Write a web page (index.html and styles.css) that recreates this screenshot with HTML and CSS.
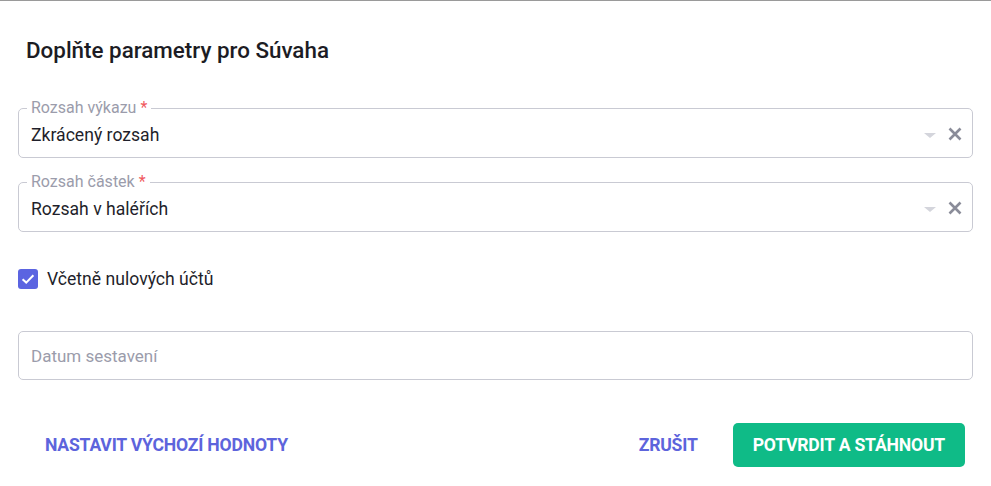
FILE: index.html
```html
<!DOCTYPE html>
<html lang="cs">
<head>
<meta charset="utf-8">
<link rel="stylesheet" href="styles.css">
</head>
<body>
<div class="dialog">
  <h2 class="title">Doplňte parametry pro Súvaha</h2>
  <div class="fields">
    <div class="field">
      <span class="label">Rozsah výkazu <span class="req">*</span></span>
      <span class="value">Zkrácený rozsah</span>
      <span class="arrow"></span>
      <svg class="clear" width="14" height="14" viewBox="0 0 14 14"><path d="M1.5 1.5 L12.5 12.5 M12.5 1.5 L1.5 12.5" stroke="#8a8c99" stroke-width="2.6"/></svg>
    </div>
    <div class="field">
      <span class="label">Rozsah částek <span class="req">*</span></span>
      <span class="value">Rozsah v haléřích</span>
      <span class="arrow"></span>
      <svg class="clear" width="14" height="14" viewBox="0 0 14 14"><path d="M1.5 1.5 L12.5 12.5 M12.5 1.5 L1.5 12.5" stroke="#8a8c99" stroke-width="2.6"/></svg>
    </div>
  </div>
  <label class="check">
    <span class="box"><svg width="16" height="16" viewBox="0 0 16 16"><path d="M2.6 8.2 L6.2 11.6 L13.4 4.2" fill="none" stroke="#fff" stroke-width="2"/></svg></span>
    <span class="check-text">Včetně nulových účtů</span>
  </label>
  <div class="plain-field"><span class="placeholder">Datum sestavení</span></div>
  <div class="actions">
    <button class="btn-text btn-reset">Nastavit výchozí hodnoty</button>
    <div class="right">
      <button class="btn-text">Zrušit</button>
      <button class="btn-primary">Potvrdit a stáhnout</button>
    </div>
  </div>
</div>
</body>
</html>
```
FILE: styles.css
```css
html, body {
  margin: 0;
  padding: 0;
  background: #fff;
}
body {
  font-family: Roboto, "Noto Sans", sans-serif;
  color: #1f1f2b;
  border-top: 1px solid #9a9a9a;
  width: 991px;
  height: 485px;
  overflow: hidden;
}
.dialog {
  padding: 0 18px;
}
.title {
  margin: 35px 0 0 8px;
  font-size: 22.4px;
  font-weight: 500;
  line-height: 28px;
  color: #1c1c24;
}
.fields {
  margin-top: 44px;
  display: flex;
  flex-direction: column;
  gap: 24px;
}
.field {
  position: relative;
  border: 1px solid #c9cad3;
  border-radius: 5px;
  height: 50px;
  box-sizing: border-box;
  padding: 0 10px 0 12px;
  display: flex;
  align-items: center;
}
.label {
  position: absolute;
  top: -10px;
  left: 8px;
  background: #fff;
  padding: 0 4px;
  font-size: 16px;
  line-height: 18px;
  color: #9b9cab;
}
.req {
  color: #f0595e;
}
.value {
  flex: 1;
  font-size: 17.6px;
  color: #1f1f2b;
  padding-top: 4px;
}
.arrow {
  width: 0;
  height: 0;
  border-left: 6px solid transparent;
  border-right: 6px solid transparent;
  border-top: 5px solid #d4d5dc;
  margin-right: 12px;
  margin-top: 4px;
}
.clear {
  margin-top: 2px;
}
.check {
  margin-top: 37px;
  display: flex;
  align-items: center;
  gap: 9px;
  height: 20px;
}
.box {
  width: 20px;
  height: 20px;
  border-radius: 3px;
  background: #5b64e1;
  display: flex;
  align-items: center;
  justify-content: center;
}
.check-text {
  font-size: 17.6px;
  color: #1f1f2b;
}
.plain-field {
  margin-top: 42px;
  height: 49px;
  box-sizing: border-box;
  border: 1px solid #c9cad3;
  border-radius: 5px;
  display: flex;
  align-items: center;
  padding: 0 12px;
}
.placeholder {
  font-size: 17px;
  color: #9b9cab;
}
.actions {
  margin-top: 43px;
  display: flex;
  justify-content: space-between;
  align-items: center;
}
.right {
  display: flex;
  align-items: center;
  gap: 18px;
  margin-right: 8px;
}
button {
  font-family: Roboto, "Noto Sans", sans-serif;
  font-size: 17.6px;
  font-weight: 700;
  text-transform: uppercase;
  letter-spacing: -0.2px;
  border: none;
  cursor: pointer;
  height: 44px;
  line-height: 44px;
}
.btn-text {
  background: none;
  color: #5d64dc;
  padding: 0 17px;
}
.btn-reset {
  padding-left: 27px;
}
.btn-primary {
  background: #0fbb87;
  color: #fff;
  border-radius: 5px;
  padding: 0 20px;
}
```
